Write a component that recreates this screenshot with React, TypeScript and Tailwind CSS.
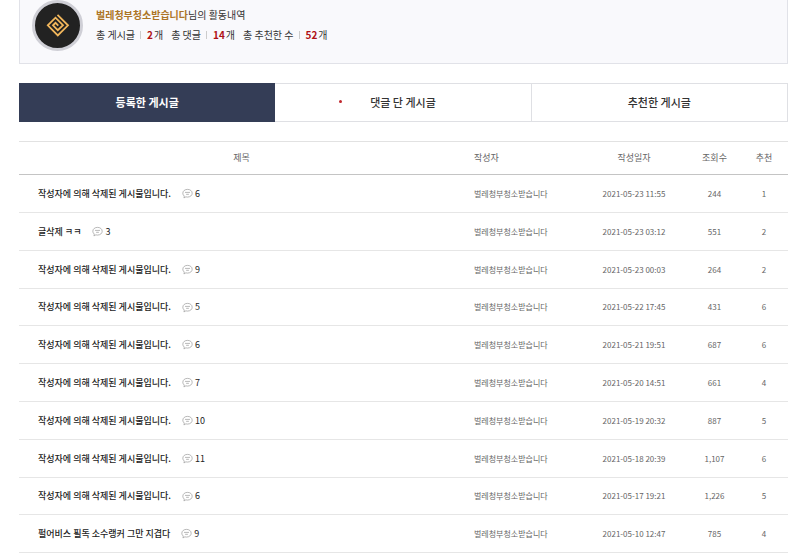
import React, { useState } from 'react';

interface Post {
  title: string;
  comments: number;
  date: string;
  views: string;
  likes: number;
}

const NICKNAME = '벌레청부청소받습니다';
const DELETED = '작성자에 의해 삭제된 게시물입니다.';

const stats = [
  { label: '총 게시글', count: 2 },
  { label: '총 댓글', count: 14 },
  { label: '총 추천한 수', count: 52 },
];

const tabs = ['등록한 게시글', '댓글 단 게시글', '추천한 게시글'];

const posts: Post[] = [
  { title: DELETED, comments: 6, date: '2021-05-23 11:55', views: '244', likes: 1 },
  { title: '글삭제 ㅋㅋ', comments: 3, date: '2021-05-23 03:12', views: '551', likes: 2 },
  { title: DELETED, comments: 9, date: '2021-05-23 00:03', views: '264', likes: 2 },
  { title: DELETED, comments: 5, date: '2021-05-22 17:45', views: '431', likes: 6 },
  { title: DELETED, comments: 6, date: '2021-05-21 19:51', views: '687', likes: 6 },
  { title: DELETED, comments: 7, date: '2021-05-20 14:51', views: '661', likes: 4 },
  { title: DELETED, comments: 10, date: '2021-05-19 20:32', views: '887', likes: 5 },
  { title: DELETED, comments: 11, date: '2021-05-18 20:39', views: '1,107', likes: 6 },
  { title: DELETED, comments: 6, date: '2021-05-17 19:21', views: '1,226', likes: 5 },
  { title: '펄어비스 필독 소수랭커 그만 지겹다', comments: 9, date: '2021-05-10 12:47', views: '785', likes: 4 },
];

// Profile emblem
const Emblem: React.FC = () => (
  <svg viewBox="0 0 45 45" className="size-full" fill="none" aria-hidden="true">
    <path
      d="M22.500 11.800L33 22.300L22.800 32.500L12.800 22.300L20.500 14.700L28 22.200L22.800 27.200L18 22.300L20.500 19.800L23.300 22.600"
      stroke="#f2b75c"
      strokeWidth="1.8"
      strokeLinejoin="miter"
    />
  </svg>
);

const CommentIcon: React.FC = () => (
  <svg viewBox="0 0 20 20" className="size-[11px]" fill="none" stroke="#9c9c9c" strokeWidth="1.3" aria-hidden="true">
    <path d="M10 2.500c5 0 8.500 3 8.500 7s-3.500 7-8.500 7c-1 0-2-.1-2.900-.4L3.500 18l.7-3.300C2.500 13.400 1.500 11.600 1.500 9.500c0-4 3.500-7 8.500-7z" />
    <path d="M5.500 8h9M7.500 11.500h5" />
  </svg>
);

const App: React.FC = () => {
  const [active, setActive] = useState(0);

  return (
    <div className="bg-white pl-[19px] pr-3 font-['Noto_Sans_CJK_KR','Noto_Sans',sans-serif] text-[#333]">
      <section className="flex gap-[13px] border border-t-0 border-[#e1e2e8] bg-[#f9f9fc] pb-3 pl-3">
        <div className="size-[51px] shrink-0 rounded-full border-3 border-[#cfcfd6] bg-[#222]">
          <Emblem />
        </div>
        <div className="pt-[5px] text-[10px] leading-5">
          <p>
            <strong className="font-bold text-[#ad7526]">{NICKNAME}</strong>님의 활동내역
          </p>
          <ul className="flex gap-2">
            {stats.map((s) => (
              <li key={s.label} className="flex items-center">
                {s.label}
                <span className="mr-[6px] ml-[5px] h-2 w-px bg-[#ccc]" />
                <strong className="mr-px font-bold text-[#b01116]">{s.count}</strong>개
              </li>
            ))}
          </ul>
        </div>
      </section>

      <nav className="mt-[19px] grid grid-cols-3">
        {tabs.map((tab, i) => (
          <button
            key={tab}
            type="button"
            onClick={() => setActive(i)}
            className={
              active === i
                ? 'relative h-[39px] border border-[#343d56] bg-[#343d56] text-[11px] font-bold text-white'
                : 'relative h-[39px] border-y border-r border-[#dfe0e4] text-[11px] font-medium'
            }
          >
            {tab}
            {i === 1 && <span className="absolute top-4 left-1/4 size-[3px] rounded-full bg-[#c0272d]" />}
          </button>
        ))}
      </nav>

      <table className="mt-[19px] w-full table-fixed border-collapse">
        <thead>
          <tr className="h-[33px] border-t border-b border-t-[#e2e2e2] border-b-[#c4c4c4] text-[9px] text-[#666]">
            <th className="font-normal">제목</th>
            <th className="w-[115px] pl-[10px] text-left font-normal">작성자</th>
            <th className="w-[110px] font-normal">작성일자</th>
            <th className="w-[51px] font-normal">조회수</th>
            <th className="w-[48px] font-normal">추천</th>
          </tr>
        </thead>
        <tbody>
          {posts.map((post) => (
            <tr
              key={post.date}
              className="h-[38px] border-b border-[#e6e6e6] text-center text-[8px] text-[#666] [&:nth-child(5n+4)]:h-[37px]"
            >
              <td className="pl-[19px]">
                <a href="#" className="flex items-center text-[9px] text-[#222]">
                  <span className="font-medium">{post.title}</span>
                  <span className="ml-[11px] flex items-center gap-[2px]">
                    <CommentIcon />
                    {post.comments}
                  </span>
                </a>
              </td>
              <td className="pl-[10px] text-left">{NICKNAME}</td>
              <td>{post.date}</td>
              <td>{post.views}</td>
              <td>{post.likes}</td>
            </tr>
          ))}
        </tbody>
      </table>
    </div>
  );
};

export default App;
